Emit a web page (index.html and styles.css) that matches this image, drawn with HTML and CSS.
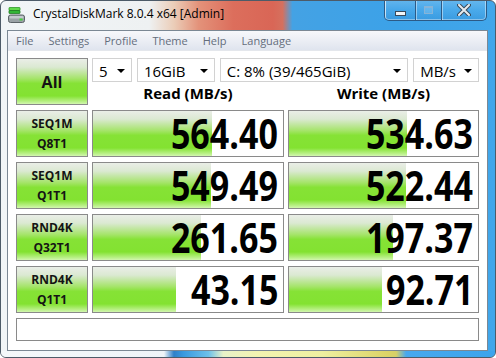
FILE: index.html
```html
<!DOCTYPE html>
<html lang="en">
  <head>
    <meta charset="UTF-8" />
    <title>CrystalDiskMark 8.0.4 x64 [Admin]</title>
    <link rel="stylesheet" href="styles.css">
  </head>
  <body>
    <div class="window">
      <div class="titlebar">
        <svg class="app-icon" width="17" height="16" viewBox="0 0 17 16">
          <rect x="1" y="0.5" width="11" height="3" rx="0.5" fill="#5fd84a" stroke="#2f9a2a" stroke-width="0.8" />
          <rect x="1" y="3.5" width="11" height="3" rx="0.5" fill="#32b536" stroke="#1f7a22" stroke-width="0.8" />
          <rect x="0.5" y="8" width="16" height="7.5" rx="2" fill="#9aa2a6" stroke="#5c6468" stroke-width="1" />
          <rect x="1.5" y="9" width="14" height="2.5" rx="1" fill="#c4cace" />
          <rect x="11.5" y="11.5" width="3" height="2" fill="#43d23a" />
        </svg>
        <span class="title">CrystalDiskMark 8.0.4 x64 [Admin]</span>
        <div class="caption-buttons">
          <div class="cap-btn cap-min"><span class="min-glyph"></span></div>
          <div class="cap-btn cap-max"><span class="max-glyph"></span></div>
          <div class="cap-btn cap-close">
            <svg width="14" height="12" viewBox="0 0 14 12">
              <path d="M2 1 L12 11 M12 1 L2 11" stroke="#3a4a5a" stroke-width="4" stroke-linecap="round" />
              <path d="M2 1 L12 11 M12 1 L2 11" stroke="#e8ecef" stroke-width="2" stroke-linecap="round" />
            </svg>
          </div>
        </div>
      </div>

      <div class="client">
        <div class="menubar">
          <span>File</span>
          <span>Settings</span>
          <span>Profile</span>
          <span>Theme</span>
          <span>Help</span>
          <span>Language</span>
        </div>

        <div class="main">
          <div class="grid">
            <div class="all-btn">All</div>
            <div class="top-right">
              <div class="combos">
                <div class="combo combo-count"><span>5</span><i class="arrow"></i></div>
                <div class="combo combo-size"><span>16GiB</span><i class="arrow"></i></div>
                <div class="combo combo-drive"><span>C: 8% (39/465GiB)</span><i class="arrow"></i></div>
                <div class="combo combo-unit"><span>MB/s</span><i class="arrow"></i></div>
              </div>
              <div class="headers">
                <div>Read (MB/s)</div>
                <div>Write (MB/s)</div>
              </div>
            </div>

            <div class="test-btn">SEQ1M<br>Q8T1</div>
            <div class="value-box"><div class="fill" style="width: 119px"></div><span class="num">564.40</span></div>
            <div class="value-box"><div class="fill" style="width: 118px"></div><span class="num">534.63</span></div>

            <div class="test-btn">SEQ1M<br>Q1T1</div>
            <div class="value-box"><div class="fill" style="width: 118px"></div><span class="num">549.49</span></div>
            <div class="value-box"><div class="fill" style="width: 117px"></div><span class="num">522.44</span></div>

            <div class="test-btn">RND4K<br>Q32T1</div>
            <div class="value-box"><div class="fill" style="width: 108px"></div><span class="num">261.65</span></div>
            <div class="value-box"><div class="fill" style="width: 104px"></div><span class="num">197.37</span></div>

            <div class="test-btn">RND4K<br>Q1T1</div>
            <div class="value-box"><div class="fill" style="width: 83px"></div><span class="num">43.15</span></div>
            <div class="value-box"><div class="fill" style="width: 93px"></div><span class="num">92.71</span></div>

            <div class="status"></div>
          </div>
        </div>
      </div>
      <div class="bottom-frame"></div>
    </div>
  </body>
</html>
```

FILE: styles.css
```css
body {
  margin: 0;
  background: #ffffff;
  font-family: "Open Sans", "Noto Sans", sans-serif;
}
.window {
  width: 496px;
  height: 358px;
  box-sizing: border-box;
  border: 1px solid #4d5b68;
  border-radius: 6px;
  overflow: hidden;
  display: flex;
  flex-direction: column;
  background: linear-gradient(90deg, #f1f5f7 0%, #eef1f2 30%, #ebcdb8 35%, #e3927a 40%, #dc6e5c 47%, #d96656 55%, #d5705e 57%, #44a2e4 59%, #3ca2e8 80%, #41a6ea 100%);
}
.titlebar {
  height: 29px;
  display: flex;
  align-items: flex-start;
  flex-shrink: 0;
}
.app-icon {
  margin: 6px 0 0 7px;
}
.title {
  margin: 4px 0 0 8px;
  font-size: 12px;
  color: #000;
}
.caption-buttons {
  margin: -1px 8px 0 auto;
  display: flex;
  height: 20px;
  border: 1px solid #2c5a86;
  border-top: none;
  border-radius: 0 0 5px 5px;
  overflow: hidden;
  box-shadow: inset 0 0 0 1px rgba(255, 255, 255, 0.45);
}
.cap-btn {
  display: flex;
  align-items: center;
  justify-content: center;
  background: linear-gradient(rgba(255, 255, 255, 0.2), rgba(255, 255, 255, 0.05) 50%, rgba(20, 80, 150, 0.1));
  border-left: 1px solid #2c5a86;
  box-shadow: inset 1px 0 0 rgba(255, 255, 255, 0.45);
}
.cap-min {
  width: 30px;
  border-left: none;
}
.cap-max {
  width: 25px;
}
.cap-close {
  width: 44px;
}
.min-glyph {
  width: 9px;
  height: 3px;
  margin-top: 6px;
  background: #f4f6f8;
  border: 1px solid #3a4a5a;
}
.max-glyph {
  width: 7px;
  height: 5px;
  border: 1px solid #86b4d8;
  border-top-width: 2px;
  background: rgba(255, 255, 255, 0.15);
}

.client {
  margin: 0 7px 0 6px;
  height: 321px;
  box-sizing: border-box;
  border: 1px solid #7b8894;
  background: #ffffff;
  display: flex;
  flex-direction: column;
  flex-shrink: 0;
}
.menubar {
  height: 19px;
  display: flex;
  align-items: center;
  gap: 15px;
  padding-left: 8px;
  font-size: 11px;
  color: #646d7c;
  background: linear-gradient(#f7f8fb, #e9ecf3 60%, #dfe4ee);
  border-bottom: 1px solid #e4e7ec;
}
.main {
  padding: 7px 7px 0 8px;
}
.grid {
  display: grid;
  grid-template-columns: 72px 192px 191px;
  grid-template-rows: 47px 47px 47px 47px 47px 23px;
  column-gap: 4px;
  row-gap: 5px;
}
.all-btn,
.test-btn {
  box-sizing: border-box;
  border: 1px solid #8a8a8a;
  background: linear-gradient(#eaeee7 0%, #dbe9d2 18%, #a4e468 44%, #86e236 54%, #83e231 82%, #b6ef82 94%, #d2f6b0 100%);
  display: flex;
  align-items: center;
  justify-content: center;
  text-align: center;
  font-weight: bold;
  color: #141414;
}
.all-btn {
  font-size: 16px;
}
.test-btn {
  font-size: 12px;
  line-height: 20px;
}
.top-right {
  grid-column: 2 / 4;
  display: flex;
  flex-direction: column;
}
.combos {
  display: flex;
  gap: 5px;
  height: 24px;
}
.combo {
  box-sizing: border-box;
  border: 1px solid #d2d2d2;
  display: flex;
  align-items: center;
  justify-content: space-between;
  padding: 1px 6px 0 6px;
  font-size: 15px;
  color: #000;
}
.combo-count {
  width: 40px;
}
.combo-size {
  width: 78px;
}
.combo-drive {
  width: 189px;
}
.combo-unit {
  width: 66px;
}
.arrow {
  width: 0;
  height: 0;
  border-left: 4px solid transparent;
  border-right: 4px solid transparent;
  border-top: 4px solid #000;
}
.headers {
  flex: 1;
  display: grid;
  grid-template-columns: 192px 191px;
  column-gap: 4px;
  align-items: end;
  text-align: center;
  font-size: 15px;
  font-weight: bold;
  line-height: 20px;
  padding-bottom: 2px;
}
.value-box {
  box-sizing: border-box;
  border: 1px solid #8a8a8a;
  display: grid;
}
.fill {
  grid-area: 1 / 1;
  height: 100%;
  background: linear-gradient(#eaeee7 0%, #dbe9d2 18%, #a4e468 44%, #86e236 54%, #83e231 82%, #b6ef82 94%, #d2f6b0 100%);
}
.num {
  grid-area: 1 / 1;
  justify-self: end;
  align-self: center;
  margin-right: 5px;
  font-weight: bold;
  font-size: 41px;
  line-height: 1;
  color: #000;
  transform: scaleX(0.83);
  transform-origin: right center;
}
.status {
  grid-column: 1 / 4;
  border: 1px solid #8a8a8a;
}
.bottom-frame {
  flex: 1;
  background: linear-gradient(90deg, #f4f8fa 0%, #eef4f8 33%, #2f80c8 35%, #3a9ae0 37%, #6cc0ea 42%, #e8f2c8 45%, #f2f4b0 52%, #eef0a0 65%, #dcd468 78%, #d6d068 80%, #48a8ee 82%, #3ca4ec 100%);
}
```
